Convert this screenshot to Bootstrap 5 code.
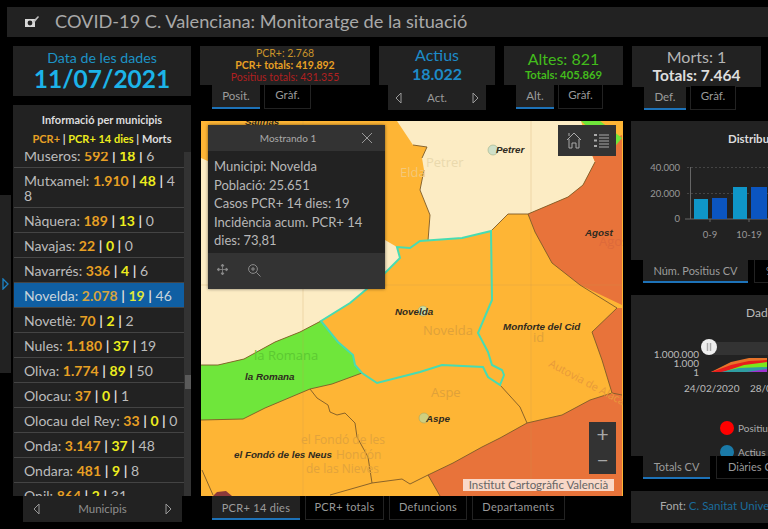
<!DOCTYPE html>
<html lang="ca">
<head>
<meta charset="utf-8">
<title>COVID-19 C. Valenciana</title>
<link href="https://cdn.jsdelivr.net/npm/bootstrap@5.3.0/dist/css/bootstrap.min.css" rel="stylesheet">
<style>
html,body{height:529px;overflow:hidden;background:#000;font-family:Lato,"Open Sans",sans-serif;color:#bdbdbd}
.shell{width:768px;height:529px;overflow:hidden;position:relative}
.topbar{margin:7px 0 0 7px;height:30px;background:#222;padding-left:16px;gap:14px;color:#a9a9a9;font-size:18.2px;white-space:nowrap}
.maincols{margin:9px 0 0 13px;width:900px}
.leftcol{width:178px;margin-right:9px;flex:none}
.tile{background:#222;text-align:center;line-height:1}
.datetile{height:50px;padding-top:3px}
.datetile .dlabel{font-size:14.2px;color:#1d93c6;line-height:17px}
.datetile .dvalue{font-size:24.5px;font-weight:700;color:#1cb3e8;line-height:26px}
.infohead{background:#222;height:47px;margin-top:9px;text-align:center;font-size:11px;font-weight:700;padding-top:9px;color:#ddd;line-height:12px}
.infohead .legendline{margin-top:7px;white-space:nowrap}
.listwrap{height:344px;overflow:hidden;background:#333;padding-right:7px;position:relative;width:178px}
.listwrap::after{content:"";position:absolute;right:0;top:223px;width:6px;height:14px;background:#5a5a5a}
.muni{margin-top:-9px;background:#222}
.muni .list-group-item{background:#222;color:#bcbcbc;border:0;border-bottom:1px solid #444;border-radius:0;padding:5px 5px 4px 10px;font-size:14px;line-height:15px;margin-left:1px;word-break:break-all}
.muni .list-group-item.sel{background:#0f5fa3;color:#c8d4dc}
.oc{color:#e8a024;font-weight:700}.ye{color:#eded1e;font-weight:700}
.sel .oc{color:#d4a440}.sel .ye{color:#dfe83a}
.bar{color:#ddd;font-weight:700}
.stepper{height:26px;background:#222;margin-left:10px;width:159px;padding:0 10px;font-size:11.5px;color:#8f8f8f}
.stepsm{height:25px;width:98px;margin-left:9px;background:#222;padding:0 7px;font-size:11.5px;color:#9a9a9a}
.rightcol{width:620px;flex:none}
.statrow{height:75px;gap:9px}
.stat1{width:170px}.stat2{width:116px}.stat3{width:119px}.stat4{width:129px}
.s1{height:39px;font-size:10.5px;line-height:12px;padding-top:1px;white-space:nowrap}
.s2big{font-size:16px;line-height:18px}
.s2val{font-size:16px;font-weight:700;line-height:19px}
.s3small{font-size:11.3px;font-weight:700;line-height:13px}
.st-a{color:#c9932a}.st-b{color:#e8a024}.st-c{color:#b02020}
.act-t{height:39px}.act-c{color:#1d8ac8}
.alt-t{height:39px;padding-top:4px}.alt-c{color:#42bc1c}
.mor-t{height:41px;padding-top:2px}.mor-a{color:#b5b5b5}.mor-b{color:#ddd;font-size:15.5px}.mor-tabs{margin-top:-1px}
.tabbar{gap:4px;padding-left:12px}
.main-tabs{padding-left:11px;gap:5px}
.t88{width:88px}.t79{width:79px}.t78{width:78px}.t93{width:93px}
.tabx{background:#000;color:#999;border:1px solid #222;border-top:0;font-size:11.5px;text-align:center;height:24px;line-height:20px;flex:none}
.tabx.on{background:#222;border:0;border-bottom:2px solid #1d72b8;line-height:21px;color:#9c9c9c}
.w48{width:48px}.w47{width:47px}.w38{width:38px}.w45{width:45px}.w42{width:42px}.w46{width:46px}
.mapcol{width:422px;margin-left:1px;margin-right:8px;flex:none}
.mapbox{width:422px;height:375px;position:relative;overflow:hidden;background:#feb535}
.mapbox svg{display:block}
.bigtab{height:24px;line-height:22px;letter-spacing:.3px}
.bigtab.on{line-height:23px;font-size:11px}
.tabx.bigtab{font-size:11px}
.popupw{position:absolute;left:7px;top:4px;width:177px;height:164px;background:#333;box-shadow:0 0 3px rgba(0,0,0,.5);display:flex;flex-direction:column}
.pophead{height:26px;font-size:10px;color:#aaa;position:relative;text-align:center;line-height:26px;flex:none;padding-right:17px}
.popbody{height:102px;background:#222;padding:6px 6px;font-size:13px;line-height:18.5px;color:#b8b8b8;flex:none}
.popfoot{flex:1;padding:10px 8px;gap:18px}
.popclose{position:absolute;right:12px;top:7px}
.mapbtns{position:absolute;right:7px;top:4px;width:58px;height:31px;background:#333;gap:12px}
.zoombtns{position:absolute;right:7px;top:301px;width:27px;height:52px;background:#333;color:#aaa}
.zoombtns div{height:26px;text-align:center;font-size:21px;line-height:24px;color:#a8a8a8}
.attrib{position:absolute;right:9px;top:358px;height:12px;width:151px;background:rgba(255,255,255,.72);color:#666;font-size:11.5px;line-height:12px;text-align:center;white-space:nowrap}
.chartcol{width:180px;flex:none}
.chartp{background:#222;position:relative;overflow:hidden}
.p1{height:139px}.p2{height:161px;margin-top:12px}
.ctitle{position:absolute;left:97px;top:9px;font-size:11.5px;font-weight:700;color:#ddd;white-space:nowrap}
.ctitle2{left:115px;top:9px;font-size:12px;font-weight:400;color:#bbb}
.charttabs{gap:6px;padding-left:12px;white-space:nowrap}
.charttabs .tabx{height:23px;font-size:11px;line-height:21px}
.wa{width:105px}.wb{width:67px}
.charttabs .wc{width:100px;text-align:left;padding-left:11px}
.fontp{background:#222;height:32px;margin-top:12px;font-size:11.5px;line-height:29px;padding-left:29px;white-space:nowrap;color:#aaa}
.fontp span{color:#1a6c9c}
.lefthandle{position:absolute;left:0;top:195px;width:11px;height:178px;background:#222}
</style>
</head>
<body>
<div class="shell">
  <div class="lefthandle d-flex align-items-center justify-content-center">
    <svg width="7" height="12" viewBox="0 0 7 12"><path d="M1 1l5 5-5 5z" fill="none" stroke="#1d82c4" stroke-width="1.3"/></svg>
  </div>
  <header class="topbar d-flex align-items-center">
    <svg width="18" height="14" viewBox="0 0 18 14"><path d="M2 4h10v8H2z" fill="#d8d8d8"/><circle cx="7" cy="8" r="2.4" fill="#222"/><path d="M10 6l5-5 1 1-5 6z" fill="#bdbdbd"/></svg>
    <span>COVID-19 C. Valenciana: Monitoratge de la situació</span>
  </header>
  <div class="maincols d-flex">
    <div class="leftcol">
      <div class="tile datetile">
        <div class="dlabel">Data de les dades</div>
        <div class="dvalue">11/07/2021</div>
      </div>
      <div class="infohead">
        <div>Informació per municipis</div>
        <div class="legendline"><span class="oc">PCR+</span> <span class="bar">|</span> <span class="ye">PCR+ 14 dies</span> <span class="bar">|</span> <span>Morts</span></div>
      </div>
      <div class="listwrap">
        <ul class="list-group muni">
          <li class="list-group-item">Museros: <span class="oc">592</span> <span class="bar">|</span> <span class="ye">18</span> <span class="bar">|</span> 6</li>
          <li class="list-group-item">Mutxamel: <span class="oc">1.910</span> <span class="bar">|</span> <span class="ye">48</span> <span class="bar">|</span> 48</li>
          <li class="list-group-item">Nàquera: <span class="oc">189</span> <span class="bar">|</span> <span class="ye">13</span> <span class="bar">|</span> 0</li>
          <li class="list-group-item">Navajas: <span class="oc">22</span> <span class="bar">|</span> <span class="ye">0</span> <span class="bar">|</span> 0</li>
          <li class="list-group-item">Navarrés: <span class="oc">336</span> <span class="bar">|</span> <span class="ye">4</span> <span class="bar">|</span> 6</li>
          <li class="list-group-item sel">Novelda: <span class="oc">2.078</span> <span class="bar">|</span> <span class="ye">19</span> <span class="bar">|</span> 46</li>
          <li class="list-group-item">Novetlè: <span class="oc">70</span> <span class="bar">|</span> <span class="ye">2</span> <span class="bar">|</span> 2</li>
          <li class="list-group-item">Nules: <span class="oc">1.180</span> <span class="bar">|</span> <span class="ye">37</span> <span class="bar">|</span> 19</li>
          <li class="list-group-item">Oliva: <span class="oc">1.774</span> <span class="bar">|</span> <span class="ye">89</span> <span class="bar">|</span> 50</li>
          <li class="list-group-item">Olocau: <span class="oc">37</span> <span class="bar">|</span> <span class="ye">0</span> <span class="bar">|</span> 1</li>
          <li class="list-group-item">Olocau del Rey: <span class="oc">33</span> <span class="bar">|</span> <span class="ye">0</span> <span class="bar">|</span> 0</li>
          <li class="list-group-item">Onda: <span class="oc">3.147</span> <span class="bar">|</span> <span class="ye">37</span> <span class="bar">|</span> 48</li>
          <li class="list-group-item">Ondara: <span class="oc">481</span> <span class="bar">|</span> <span class="ye">9</span> <span class="bar">|</span> 8</li>
          <li class="list-group-item">Onil: <span class="oc">864</span> <span class="bar">|</span> <span class="ye">2</span> <span class="bar">|</span> 31</li>
        </ul>
      </div>
      <div class="stepper d-flex align-items-center justify-content-between">
        <svg width="7" height="12" viewBox="0 0 7 12"><path d="M6 1L1 6l5 5z" fill="none" stroke="#999"/></svg>
        <span>Municipis</span>
        <svg width="7" height="12" viewBox="0 0 7 12"><path d="M1 1l5 5-5 5z" fill="none" stroke="#999"/></svg>
      </div>
    </div>
    <div class="rightcol">
      <div class="statrow d-flex">
        <div class="stat1">
          <div class="tile s1">
            <div class="st-a">PCR+: 2.768</div>
            <div class="fw-bold st-b">PCR+ totals: 419.892</div>
            <div class="st-c">Positius totals: 431.355</div>
          </div>
          <div class="tabbar d-flex"><div class="tabx on w48">Posit.</div><div class="tabx w47">Gràf.</div></div>
        </div>
        <div class="stat2">
          <div class="tile act-t">
            <div class="s2big act-c">Actius</div>
            <div class="s2val act-c">18.022</div>
          </div>
          <div class="stepsm d-flex align-items-center justify-content-between">
            <svg width="7" height="12" viewBox="0 0 7 12"><path d="M6 1L1 6l5 5z" fill="none" stroke="#999"/></svg>
            <span>Act.</span>
            <svg width="7" height="12" viewBox="0 0 7 12"><path d="M1 1l5 5-5 5z" fill="none" stroke="#999"/></svg>
          </div>
        </div>
        <div class="stat3">
          <div class="tile alt-t">
            <div class="s2big alt-c">Altes: 821</div>
            <div class="s3small alt-c">Totals: 405.869</div>
          </div>
          <div class="tabbar d-flex"><div class="tabx on w38">Alt.</div><div class="tabx w45">Gràf.</div></div>
        </div>
        <div class="stat4">
          <div class="tile mor-t">
            <div class="s2big mor-a">Morts: 1</div>
            <div class="s2val mor-b">Totals: 7.464</div>
          </div>
          <div class="tabbar d-flex mor-tabs"><div class="tabx on w42">Def.</div><div class="tabx w46">Gràf.</div></div>
        </div>
      </div>
      <div class="d-flex">
        <div class="mapcol">
          <div class="mapbox">
            <svg width="422" height="375" viewBox="201 121 422 375">
              <rect x="201" y="121" width="422" height="375" fill="#feb535"/>
              <path d="M201 158L385 240L397 247L400 258L380 278L350 303L321 321L300 332L275 342L244 359L218 365L201 365Z" fill="#fcecc4"/>
              <path d="M397 121L413 145L427 147L422 158L424 170L420 190L430 215L428 241L462 238L491 231L508 214L528 214L568 197L583 185L595 162L590 150L581 121Z" fill="#fcecc4"/>
              <path d="M201 365L218 365L244 359L275 342L300 332L321 321L338 342L353 355L355 365L362 373L332 384L310 389L265 408L243 419L201 420Z" fill="#6fe63b"/>
              <path d="M622 135L622 305L580 285L552 263L535 232L528 214L568 197L583 185L595 162L590 150Z" fill="#e8733a"/>
              <path d="M622 308L617 308L592 332L602 360L612 393L590 400L562 415L527 423L500 438L482 447L453 463L428 475L440 496L622 496Z" fill="#e8733a"/>
              <path d="M581 121L600 121L622 138L612 150Z" fill="#6fe63b"/>
              <path d="M213 496L217 492L226 491L232 496Z" fill="#8c3a3a"/>
              <path d="M303 121V496M531 121V496M201 285H622" stroke="#c89a50" stroke-opacity=".25" fill="none"/>
              <g fill="none" stroke="#7d5a28" stroke-width=".9">
                <path d="M201 365L218 365L244 359L275 342L300 332L321 321"/>
                <path d="M201 420L243 419L265 408L310 389L332 384L362 373"/>
                <path d="M310 389L317 398L328 405L330 412L337 415L345 413L355 423L357 437L368 457L372 483L402 479L410 484L428 475L453 463L482 447L500 438L527 423L562 415L590 400L612 393L622 395"/>
                <path d="M372 483L330 495M202 470L213 495M428 475L440 496"/>
                <path d="M500 385L520 407L527 423"/>
                <path d="M491 231L508 214L528 214L568 197L583 185L595 162M528 214L535 232L552 263L580 285L617 308L592 332L602 360L612 393"/>
                <path d="M428 241L430 215L420 190L424 170M413 145L427 147L422 158"/>
              </g>
              <path d="M321 321L350 303L380 278L400 258L397 247L410 248L420 241L462 238L491 231L492 300L478 333L488 352L492 365L502 370L504 375L500 385L488 377L483 367L442 365L420 372L377 383L362 373L355 365L353 355L338 342Z" fill="none" stroke="#47dcb2" stroke-width="2"/>
              <g font-family="'Open Sans',sans-serif" font-size="13">
                <text x="426" y="167" fill="#ead9ad">Petrer</text>
                <text x="400" y="177" fill="#f4c878">Elda</text>
                <text x="423" y="335" fill="#dfa13a">Novelda</text>
                <text x="431" y="397" fill="#dfa13a">Aspe</text>
                <text x="599" y="246" fill="#dd6a3a">Agost</text>
                <text x="254" y="360" fill="#5cc932">la Romana</text>
                <text x="533" y="342" fill="#dfa13a">id</text>
                <g fill="#e2a33c" font-size="12">
                  <text x="301" y="444">el Fondó de les</text>
                  <text x="336" y="459">Hondón</text>
                  <text x="306" y="473">de las Nieves</text>
                </g>
                <text transform="translate(548 366) rotate(28)" fill="#e89a3a" font-size="11">Autovia de Alacant</text>
              </g>
              <circle cx="493" cy="150" r="5" fill="#cfe0c8" stroke="#9ab08a" stroke-width=".6"/>
              <circle cx="423" cy="311" r="5" fill="#cfe0a8" stroke="#a8a860" stroke-width=".6"/>
              <circle cx="424" cy="418" r="5" fill="#cfcf80" stroke="#a8a860" stroke-width=".6"/>
              <g font-family="'Liberation Sans',sans-serif" font-weight="700" font-style="italic" font-size="9.800" fill="#2e2a20">
                <text x="496" y="153">Petrer</text>
                <text x="585" y="236">Agost</text>
                <text x="395" y="315">Novelda</text>
                <text x="503" y="330">Monforte del Cid</text>
                <text x="426" y="422">Aspe</text>
                <text x="245" y="380">la Romana</text>
                <text x="234" y="458">el Fondó de les Neus</text>
                <text x="245" y="125">Salinas</text>
              </g>
            </svg>
            <div class="popupw">
              <div class="pophead">Mostrando 1
                <svg class="popclose" width="12" height="12" viewBox="0 0 12 12"><path d="M1 1l10 10M11 1L1 11" stroke="#999" stroke-width="1"/></svg>
              </div>
              <div class="popbody">Municipi: Novelda<br>Població: 25.651<br>Casos PCR+ 14 dies: 19<br>Incidència acum. PCR+ 14 dies: 73,81</div>
              <div class="popfoot d-flex align-items-start">
                <svg width="13" height="13" viewBox="0 0 13 13"><path d="M6.5 1v11M1 6.5h11M6.5 1L5 3h3zM6.5 12L5 10h3zM1 6.5L3 5v3zM12 6.5L10 5v3z" fill="#8a8a8a" stroke="#8a8a8a" stroke-width=".8"/></svg>
                <svg width="15" height="15" viewBox="0 0 15 15"><circle cx="6" cy="6" r="4.4" fill="none" stroke="#8a8a8a"/><path d="M9.5 9.5l4 4M4 6h4M6 4v4" stroke="#8a8a8a"/></svg>
              </div>
            </div>
            <div class="mapbtns d-flex align-items-center justify-content-center">
              <svg width="16" height="17" viewBox="0 0 16 17"><path d="M1 8l7-7 7 7M3 7v9h3v-5h4v5h3V7M3 4V1" fill="none" stroke="#aaa" stroke-width="1"/></svg>
              <svg width="15" height="15" viewBox="0 0 15 15"><path d="M5 2h10M5 5h10M5 8h10M5 11h10M5 14h10" stroke="#aaa"/><path d="M0 1h3v2H0zM0 6.500h3v2H0zM0 12h3v2H0z" fill="#aaa"/></svg>
            </div>
            <div class="zoombtns"><div>+</div><div>−</div></div>
            <div class="attrib">Institut Cartogràfic Valencià</div>
          </div>
          <div class="tabbar main-tabs d-flex">
            <div class="tabx bigtab on t88">PCR+ 14 dies</div>
            <div class="tabx bigtab t79">PCR+ totals</div>
            <div class="tabx bigtab t78">Defuncions</div>
            <div class="tabx bigtab t93">Departaments</div>
          </div>
        </div>
        <div class="chartcol">
          <div class="chartp p1">
            <div class="ctitle">Distribució per edats</div>
            <svg width="180" height="139" viewBox="632 121 180 139">
              <g font-family="Lato,sans-serif" font-size="9.500" fill="#999" text-anchor="end">
                <text x="681" y="171">40.000</text><text x="681" y="197">20.000</text><text x="681" y="222">0</text>
              </g>
              <path d="M688 167.500h92M688 193.500h92" stroke="#444" stroke-dasharray="2 2"/>
              <path d="M691.500 167V219M686 219h94M711 219v3M750 219v3" stroke="#666" fill="none"/>
              <rect x="695" y="199" width="14" height="20" fill="#0f96c8"/>
              <rect x="713" y="198" width="15" height="21" fill="#0b55c0"/>
              <rect x="734" y="187" width="14" height="32" fill="#0f96c8"/>
              <rect x="752" y="187" width="16" height="32" fill="#0b55c0"/>
              <g font-family="Lato,sans-serif" font-size="9.500" fill="#999" text-anchor="middle"><text x="711" y="238">0-9</text><text x="750" y="238">10-19</text></g>
            </svg>
          </div>
          <div class="charttabs d-flex"><div class="tabx on wa">Núm. Positius CV</div><div class="tabx wc">% Positius CV</div></div>
          <div class="chartp p2">
            <div class="ctitle ctitle2">Dades acumulades</div>
            <svg width="180" height="161" viewBox="632 295 180 161">
              <rect x="714" y="342" width="98" height="13" fill="#333"/>
              <g font-family="Lato,sans-serif" font-size="10" fill="#bbb" text-anchor="end">
                <text x="700" y="358">1.000.000</text><text x="700" y="367">1.000</text><text x="700" y="376">1</text>
              </g>
              <path d="M712 372L718 369L732 362L750 358L768 358V372Z" fill="#e8732a"/>
              <path d="M712 372L718 370L732 365L750 361L768 360V372Z" fill="#e81c1c"/>
              <path d="M724 372L730 370L745 365L768 362V372Z" fill="#7ae81c"/>
              <path d="M722 372L740 368L768 367V372Z" fill="#1d8ac4" opacity=".8"/>
              <path d="M748 372L768 369V372Z" fill="#a030d0"/>
              <circle cx="710" cy="347" r="8" fill="#eee"/>
              <path d="M708.500 343v8M711.500 343v8" stroke="#aaa" stroke-width="1.500"/>
              <g font-family="Lato,sans-serif" font-size="10" fill="#bbb"><text x="685" y="392">24/02/2020</text><text x="751" y="392">28/02/2021</text></g>
              <circle cx="728" cy="428" r="7" fill="#f00"/>
              <circle cx="728" cy="452" r="7" fill="#1a7aa8"/>
              <g font-family="Lato,sans-serif" font-size="10" fill="#aaa"><text x="739" y="432">Positius</text><text x="739" y="456">Actius</text></g>
            </svg>
          </div>
          <div class="charttabs d-flex"><div class="tabx on wb">Totals CV</div><div class="tabx wc">Diàries CV</div></div>
          <div class="fontp">Font: <span>C. Sanitat Universal i Salut Pública</span></div>
        </div>
      </div>
    </div>
  </div>
</div>
<script src="https://cdn.jsdelivr.net/npm/bootstrap@5.3.0/dist/js/bootstrap.bundle.min.js"></script>
</body>
</html>
